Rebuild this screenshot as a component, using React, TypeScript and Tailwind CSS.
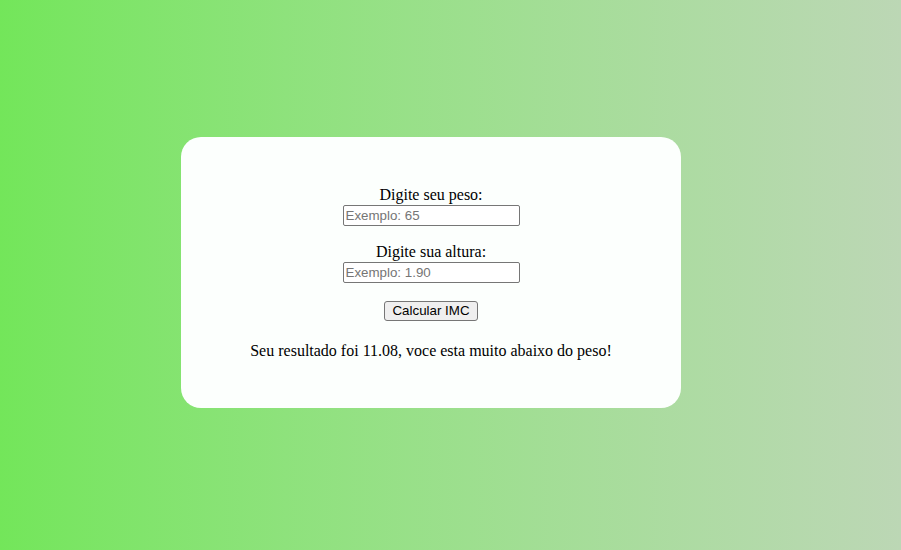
const App = () => {
  return (
    <div className="min-h-[550px] w-full flex items-start justify-start pt-[137px] pl-[181px] bg-gradient-to-r from-[#73e65a] to-[#bcd7b5]">
      <div className="w-[500px] h-[271px] rounded-[20px] bg-[#fcfffd] flex flex-col items-center justify-center text-black text-[16px] font-['Liberation_Serif','Times_New_Roman',serif]">
        <label className="leading-[18px]">Digite seu peso:</label>
        <input
          type="text"
          placeholder="Exemplo: 65"
          className="mt-[1px] w-[177px] h-[21px] border border-[#767676] rounded-[2px] px-[2px] text-[13.33px] font-['Liberation_Sans',Arial,sans-serif] placeholder:text-[#757575] outline-none bg-white"
        />
        <div className="h-[17px]" />
        <label className="leading-[18px]">Digite sua altura:</label>
        <input
          type="text"
          placeholder="Exemplo: 1.90"
          className="mt-[1px] w-[177px] h-[21px] border border-[#767676] rounded-[2px] px-[2px] text-[13.33px] font-['Liberation_Sans',Arial,sans-serif] placeholder:text-[#757575] outline-none bg-white"
        />
        <div className="h-[18px]" />
        <button className="w-[94px] h-[20px] bg-[#efefef] border border-[#767676] rounded-[3px] text-[13.33px] font-['Liberation_Sans',Arial,sans-serif] leading-none">
          Calcular IMC
        </button>
        <p className="mt-[21px] leading-[18px]">
          Seu resultado foi 11.08, voce esta muito abaixo do peso!
        </p>
      </div>
    </div>
  );
};

export default App;
